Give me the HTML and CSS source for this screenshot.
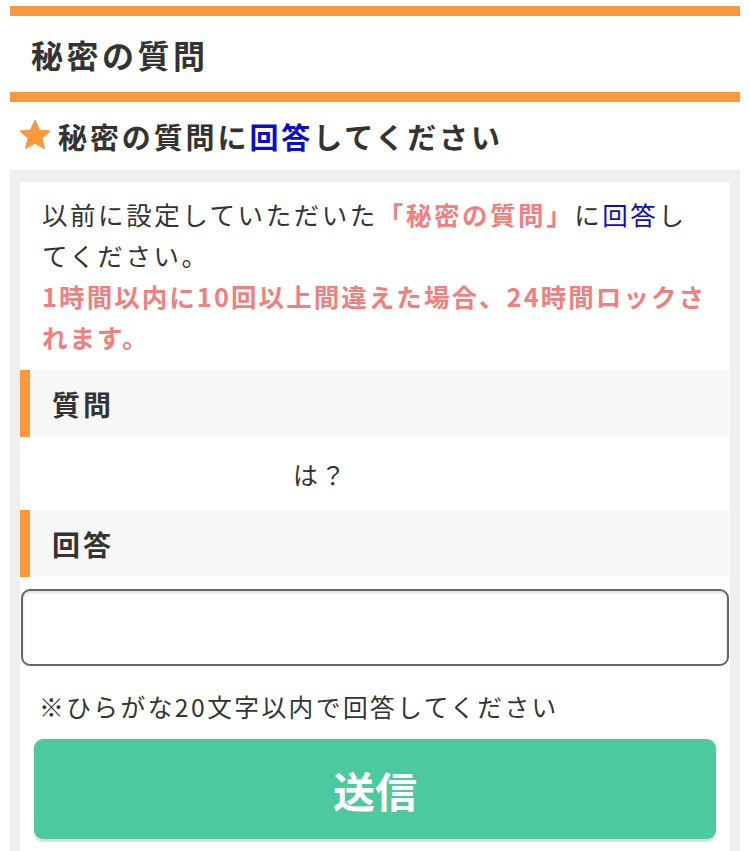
FILE: index.html
```html
<!DOCTYPE html>
<html lang="ja">
<head>
<meta charset="utf-8">
<title>秘密の質問</title>
<link rel="stylesheet" href="styles.css">
</head>
<body>
<div class="page">
  <div class="title-block">
    <h1 class="title">秘密の質問</h1>
  </div>
  <h2 class="subhead">
    <svg class="star" viewBox="0 0 24 24" aria-hidden="true"><path d="M12 1.6l3.1 6.9 7.4.7-5.6 5 1.7 7.3L12 17.7l-6.6 3.8 1.7-7.3-5.6-5 7.4-.7z" fill="#f8993e" stroke="#f8993e" stroke-width="0.8" stroke-linejoin="round"/></svg>
    <span>秘密の質問に<span class="blue">回答</span>してください</span>
  </h2>
  <div class="panel">
    <div class="inner">
      <p class="intro">以前に設定していただいた<strong class="red">「秘密の質問」</strong>に<span class="blue">回答</span>し<br>てください。<br><strong class="red warn">1時間以内に10回以上間違えた場合、24時間ロックさ<br>れます。</strong></p>
      <div class="label">質問</div>
      <div class="question">は？</div>
      <div class="label">回答</div>
      <div class="field"><input class="answer" type="text"></div>
      <p class="note">※ひらがな20文字以内で回答してください</p>
      <div class="actions"><button class="submit" type="button">送信</button></div>
    </div>
  </div>
</div>
</body>
</html>
```
FILE: styles.css
```css
html, body {
  margin: 0;
  padding: 0;
  background: #ffffff;
}
body {
  font-family: "Noto Sans CJK JP", "Noto Sans", sans-serif;
  color: #333333;
}
.page {
  padding: 6px 10px 0 10px;
}
.title-block {
  border-top: 10px solid #f8993e;
  border-bottom: 10px solid #f8993e;
  height: 76px;
  display: flex;
  align-items: center;
  padding-left: 21px;
}
.title {
  margin: 0;
  font-size: 32px;
  font-weight: 700;
  letter-spacing: 0.11em;
  line-height: 1;
}
.subhead {
  margin: 0;
  height: 68px;
  display: flex;
  align-items: center;
  gap: 6px;
  padding-left: 8px;
  font-size: 29px;
  font-weight: 700;
  letter-spacing: 0.1em;
  line-height: 1;
}
.star {
  width: 34px;
  height: 34px;
  flex: none;
  margin-top: -3px;
}
.blue {
  color: #0b0bcc;
}
.red {
  color: #f07f7f;
  font-weight: 700;
}
.warn {
  letter-spacing: 2.05px;
}
.panel {
  background: #efefef;
  padding: 12px 10px 0 10px;
}
.inner {
  background: #ffffff;
  padding-bottom: 20px;
}
.intro {
  margin: 0;
  padding: 11px 8px 13px 22px;
  font-size: 25.5px;
  line-height: 41px;
  letter-spacing: 0.1em;
}
.label {
  height: 67px;
  background: #f8f8f8;
  border-left: 10px solid #f8993e;
  padding-left: 22px;
  display: flex;
  align-items: center;
  font-size: 28px;
  font-weight: 700;
  letter-spacing: 3px;
}
.question {
  height: 73px;
  display: flex;
  align-items: center;
  padding-left: 273px;
  font-size: 25px;
  letter-spacing: 0.1em;
}
.field {
  padding: 12px 1px 0 1px;
}
.answer {
  display: block;
  width: 100%;
  height: 77px;
  box-sizing: border-box;
  border: 2px solid #666666;
  border-radius: 9px;
  background: #ffffff;
  box-shadow: inset 0 2px 3px rgba(0, 0, 0, 0.12);
  font-size: 25px;
  padding: 0 14px;
  outline: none;
}
.note {
  margin: 20px 0 0 0;
  padding-left: 19px;
  font-size: 24.7px;
  line-height: 40px;
  letter-spacing: 0.1em;
}
.actions {
  padding: 13px 14px 0 14px;
}
.submit {
  display: block;
  width: 100%;
  height: 100px;
  border: none;
  border-radius: 9px;
  background: #4dc9a0;
  box-shadow: 0 3px 0 #dddddd;
  color: #ffffff;
  font-family: "Noto Sans CJK JP", "Noto Sans", sans-serif;
  font-size: 42px;
  font-weight: 700;
  letter-spacing: 0;
  cursor: pointer;
}
```
